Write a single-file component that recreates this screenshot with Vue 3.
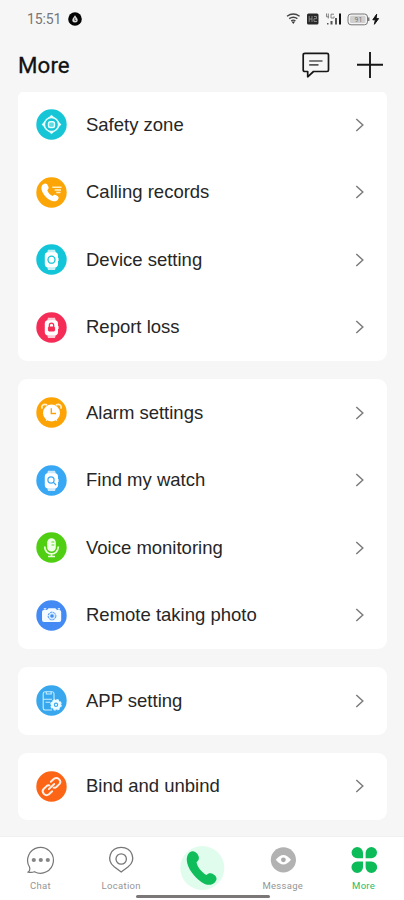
<script setup>
const groups = [
  [
    { label: 'Safety zone', icon: 'zone', color: '#16c5d6' },
    { label: 'Calling records', icon: 'call', color: '#fba506' },
    { label: 'Device setting', icon: 'device', color: '#12c5d8' },
    { label: 'Report loss', icon: 'loss', color: '#f52c56' },
  ],
  [
    { label: 'Alarm settings', icon: 'alarm', color: '#fca405' },
    { label: 'Find my watch', icon: 'find', color: '#38a7f4' },
    { label: 'Voice monitoring', icon: 'voice', color: '#50cf12' },
    { label: 'Remote taking photo', icon: 'camera', color: '#438af4' },
  ],
  [{ label: 'APP setting', icon: 'app', color: '#38a7ed' }],
  [{ label: 'Bind and unbind', icon: 'bind', color: '#fc6416' }],
]
</script>

<template>
  <div class="screen">
    <div class="status">
      <span class="time">15:51</span>
      <svg class="badge" width="14" height="14" viewBox="0 0 14 14">
        <circle cx="7" cy="7" r="6.8" fill="#050505" />
        <path d="M7 3.2C8 5 9.7 6.2 9.7 8.1A2.7 2.5 0 0 1 4.3 8.1C4.3 6.3 6 5 7 3.2Z" fill="#ddd" />
        <path d="M6.8 5.8V8.5H8.2" fill="none" stroke="#333" stroke-width=".8" />
      </svg>
      <svg class="indicators" width="96" height="16" viewBox="0 0 96 16">
        <g fill="none" stroke="#444" stroke-width="1.4">
          <path d="M1 5.3Q7.3 .8 13.6 5.3M3.2 7.6Q7.3 4.8 11.4 7.6" />
          <path d="M5.2 9.8Q7.3 8.5 9.4 9.8" />
        </g>
        <path d="M5.5 10.5H9.1L7.3 13Z" fill="#333" />
        <rect x="21" y="2.5" width="11.5" height="11" rx="1.5" fill="#292929" />
        <path d="M23.2 5V11M23.2 8H26M26 5V11M28 5.5H30.5V7.7H28V10.5H31" fill="none" stroke="#999" stroke-width=".8" />
        <path d="M40.5 2.5V5.8H43M42.3 2.5V7.5M48 3.2H45V7H48V5.3" fill="none" stroke="#777" stroke-width=".9" />
        <path d="M41 12H42.5V13.5H41ZM44.5 10H46.5V13.5H44.5ZM49 7H51V13.5H49Z" fill="#555" />
        <path d="M53 2.5H55V13.5H53Z" fill="#111" />
        <rect x="62" y="3" width="19.5" height="10.8" rx="3" fill="#f4f4f4" stroke="#777" />
        <rect x="64" y="4.8" width="15.5" height="7.2" rx="1.5" fill="#cfcfcf" />
        <path d="M82.7 6.5V10" stroke="#777" stroke-width="1.5" />
        <text x="68.5" y="11" class="level">91</text>
        <path d="M90.7 3.2L86.8 8.8H89.4L88.4 13.3L92.6 7.6H90Z" fill="#111" stroke="#111" stroke-width="1" />
      </svg>
    </div>

    <header class="header">
      <h1>More</h1>
      <svg class="comment" width="30" height="28" viewBox="0 0 30 28" fill="none" stroke="#171717" stroke-width="1.7" stroke-linejoin="round">
        <path d="M4 2.3H26Q27.5 2.3 27.5 3.8V19Q27.5 20.5 26 20.5H12.5L6.7 25.8V20.5H4Q2.2 20.5 2.2 19V3.8Q2.2 2.3 4 2.3Z" />
        <path d="M8.2 10H21.5M8.2 13.8H17.5" stroke="#555" />
      </svg>
      <svg class="plus" width="28" height="28" viewBox="0 0 28 28" stroke="#171717" stroke-width="1.9">
        <path d="M1 13.7H27M14 1V27" />
      </svg>
    </header>

    <main class="groups">
      <section v-for="(group, i) in groups" :key="i" class="card">
        <div v-for="item in group" :key="item.label" class="row">
          <svg class="icon" width="31" height="31" viewBox="0 0 31 31">
            <circle cx="15.5" cy="15.5" r="15.2" :fill="item.color" />

            <g v-if="item.icon === 'zone'" fill="none" stroke="#e5ffff">
              <circle cx="15.5" cy="15.5" r="7.1" stroke-width="1.5" />
              <rect x="12.5" y="12.7" width="6" height="5.8" rx="1.8" fill="#5edbe6" stroke-width="1.4" />
              <path d="M13.8 8.2H17.2L15.5 6.5ZM13.8 22.8H17.2L15.5 24.5ZM8.2 13.8V17.2L6.5 15.5ZM22.8 13.8V17.2L24.5 15.5Z" fill="#e5ffff" stroke-width="1.2" />
            </g>

            <g v-else-if="item.icon === 'call'">
              <path d="M7.2 7.3C9.3 5.8 10.8 6.4 12.1 8.9C13.3 11.1 12.3 12.2 11.3 13.2C12 15.6 14.2 17.9 16.6 19C17.7 17.8 18.8 17.2 20.7 18.4C23 19.9 23.2 21 21.8 22.7C19.8 25 16.5 24.8 13 22.5C8.2 19.3 5.1 13.8 5.4 10.4C5.6 9 6.3 8 7.2 7.3Z" fill="white" />
              <path d="M16.3 10.3H25.5M18.6 13H25M20.3 15.5H24.5" stroke="#fff0c4" stroke-width="1.4" />
            </g>

            <g v-else-if="['device', 'loss', 'find'].includes(item.icon)">
              <path d="M12 5.7H19L20.3 10H10.7ZM10.7 21H20.3L19 26H12Z" fill="white" opacity=".75" />
              <rect x="8.8" y="8.3" width="13.2" height="15" rx="3.4" fill="white" />
              <path d="M22.3 14V17" stroke="white" stroke-width=".7" />
              <circle v-if="item.icon === 'device'" cx="15.5" cy="15.7" r="3.5" fill="none" :stroke="item.color" stroke-width="1.3" />
              <g v-else-if="item.icon === 'loss'" :stroke="item.color" fill="none">
                <path d="M13.3 15V13.4A2.2 2.2 0 0 1 17.7 13.4V15" stroke-width="1.2" />
                <rect x="12.4" y="15" width="6.2" height="4" rx=".6" :fill="item.color" />
              </g>
              <g v-else :stroke="item.color" stroke-width="1.2" fill="none">
                <circle cx="15" cy="15" r="3.1" />
                <path d="M17.2 17.2L20 20" />
              </g>
            </g>

            <g v-else-if="item.icon === 'alarm'">
              <path d="M6.3 11.7C4.7 8.5 7.5 6.4 11.2 8M19.8 8C23.5 6.4 26.3 8.5 24.7 11.7" fill="none" stroke="#fff0ca" stroke-width="1.6" />
              <circle cx="15.5" cy="16" r="8.5" fill="white" />
              <path d="M11 22.5L10.3 23.6M20 22.5L20.7 23.6" stroke="white" stroke-width="1.3" />
              <path d="M15.3 11.3V16.5H20" fill="none" :stroke="item.color" stroke-width="1.4" />
            </g>

            <g v-else-if="item.icon === 'voice'">
              <rect x="11.2" y="6.3" width="8.6" height="13.2" rx="4.3" fill="#f1ffe9" />
              <path d="M15.5 10H18.3M15.5 13H18.3" :stroke="item.color" stroke-width=".9" />
              <path d="M8.7 14.5C8.7 24.3 22.3 24.3 22.3 14.5M15.5 21.8V24M12 24.5H19" fill="none" stroke="#e9ffdc" stroke-width="1.7" />
            </g>

            <g v-else-if="item.icon === 'camera'">
              <path d="M7.8 10H11L12.5 8.2H19.3L21 10H23.2Q25.2 10 25.2 12V20Q25.2 22 23.2 22H8Q6 22 6 20V12Q6 10 7.8 10Z" fill="#f3fbff" />
              <path d="M7.8 8.9H10.3M21.8 8.9H24" stroke="white" stroke-width="1.2" />
              <circle cx="16" cy="16" r="3.9" fill="#d3ebff" :stroke="item.color" stroke-width=".9" stroke-dasharray="2.4 .8" />
              <circle cx="16" cy="16" r="1.8" :fill="item.color" />
            </g>

            <g v-else-if="item.icon === 'app'" fill="none" stroke="#c8efff" stroke-width="1.1">
              <path d="M18 14V8.8Q18 6.8 16.2 6.8H9Q7.2 6.8 7.2 8.8V23.3Q7.2 25 9 25H16M10.3 7V9H15.2V7M7.2 14.3H16M9.5 17.2H14" />
              <circle cx="20" cy="19.8" r="3.6" stroke="#eefcff" stroke-width="2.8" />
              <circle cx="20" cy="19.8" r="5.2" stroke="#eefcff" stroke-width="1.2" stroke-dasharray="2.4 1.68" />
              <circle cx="20" cy="19.8" r="1.1" fill="#eefcff" stroke="none" />
            </g>

            <g v-else fill="none" stroke="#fff1e9" stroke-width="1.9" stroke-linecap="round" stroke-linejoin="round">
              <path d="M14.8 10.8L18 7.8Q20.6 5.9 23 8.1Q25.6 10.7 23.4 13.1L20.4 16Q19.1 17.1 17.6 16.7" />
              <path d="M16.2 20.3L13 23.3Q10.4 25.2 8 23Q5.4 20.4 7.6 18L10.6 15.1Q11.9 14 13.4 14.4" />
              <path d="M12.8 18.1L18.2 13" />
            </g>
          </svg>
          <span class="label">{{ item.label }}</span>
          <svg class="arrow" width="10" height="16" viewBox="0 0 10 16" fill="none" stroke="#7c7c7c" stroke-width="1.5">
            <path d="M1.3 2L7.8 8L1.3 14" />
          </svg>
        </div>
      </section>
    </main>

    <nav class="tabs">
      <div class="tab">
        <svg width="30" height="30" viewBox="0 0 30 30" fill="none" stroke="#777" stroke-width="1.2">
          <path d="M4.5 22A12.9 12.9 0 1 1 9.5 26.7Q6.5 28 3.2 27.1Q5.5 25.5 4.5 22Z" />
          <g fill="#858585" stroke="none">
            <circle cx="8.8" cy="15" r="2.1" /><circle cx="15.8" cy="15" r="2.1" /><circle cx="22.8" cy="15" r="2.1" />
          </g>
        </svg>
        <span>Chat</span>
      </div>
      <div class="tab">
        <svg width="30" height="30" viewBox="0 0 30 30" fill="none" stroke="#777" stroke-width="1.3">
          <path d="M15.2 27L8.2 21.8C-.3 14.8 4.2 2.3 15.2 2.3S30.7 14.8 22.2 21.8Z" />
          <circle cx="15.2" cy="14" r="5.2" />
        </svg>
        <span>Location</span>
      </div>
      <div class="dial">
        <svg width="46" height="46" viewBox="0 0 46 46">
          <circle cx="23.3" cy="23" r="22" fill="#e0fcec" />
          <path d="M10.3 7.7C13 5 16.8 6 18.9 9.7C20.8 13 19.9 15.3 17.5 17.2C18.4 22 22.7 27.2 27.4 30C29.6 28.3 31.4 27.6 34.6 29.5C38.1 31.5 38.5 34.7 35.8 37.4C32.3 41 27.4 40.5 22.3 36.9C14.4 31.5 8.3 22.5 7.8 15.5C7.6 12.2 8.3 9.7 10.3 7.7Z" fill="#10bd5b" />
        </svg>
      </div>
      <div class="tab">
        <svg width="30" height="30" viewBox="0 0 30 30">
          <circle cx="15.4" cy="14.8" r="12.6" fill="#b2b2b2" />
          <path d="M7.8 14.8Q15.4 5.3 23 14.8Q15.4 24.3 7.8 14.8Z" fill="white" />
          <circle cx="15.4" cy="14.8" r="2.4" fill="#aaa" />
        </svg>
        <span>Message</span>
      </div>
      <div class="tab active">
        <svg width="30" height="30" viewBox="0 0 30 30" fill="#0cbc59">
          <path d="M8.2 2A5.8 5.8 0 0 1 14 7.8V13.2H8.2A5.6 5.6 0 0 1 8.2 2Z" />
          <path d="M22.4 2A5.8 5.8 0 0 0 16.6 7.8V13.2H22.4A5.6 5.6 0 0 0 22.4 2Z" />
          <path d="M8.2 28A5.8 5.8 0 0 0 14 22.2V16.5H8.2A5.7 5.7 0 0 0 8.2 28Z" />
          <path d="M22.4 28A5.8 5.8 0 0 1 16.6 22.2V16.5H22.4A5.7 5.7 0 0 1 22.4 28Z" />
        </svg>
        <span>More</span>
      </div>
      <div class="home-bar"></div>
    </nav>
  </div>
</template>

<style>
body {
  margin: 0;
  background: #f6f6f6;
}
</style>

<style scoped>
.screen {
  width: 404px;
  height: 900px;
  display: flex;
  flex-direction: column;
  overflow: hidden;
  background: #f6f6f6;
  font-family: 'Liberation Sans', sans-serif;
}
.status {
  height: 37px;
  flex: none;
  display: flex;
  align-items: center;
  box-sizing: border-box;
  padding: 0 22px 0 27px;
}
.time {
  width: 41px;
  font: 14px/18px Roboto, sans-serif;
  color: #777;
  letter-spacing: -0.1px;
}
.indicators {
  margin-left: auto;
}
.level {
  font: 7px Roboto, sans-serif;
  fill: #777;
}
.header {
  height: 55px;
  flex: none;
  display: flex;
  align-items: center;
  box-sizing: border-box;
  padding: 0 20px 0 18px;
}
h1 {
  flex: 1;
  margin: 0;
  font: 400 22.3px/28px Roboto, sans-serif;
  -webkit-text-stroke: 0.3px #111;
  letter-spacing: 0.1px;
  color: #111;
}
.comment {
  margin-right: 25px;
}
.groups {
  flex: 1;
  min-height: 0;
  overflow: hidden;
  display: flex;
  flex-direction: column;
  gap: 18.1px;
  padding: 0 17px 0 18px;
}
.card {
  flex: none;
  background: #fff;
  border-radius: 9px;
}
.card:first-child {
  margin-top: -1.2px;
  border-radius: 7px 7px 9px 9px;
}
.row {
  height: 67.5px;
  display: flex;
  align-items: center;
  padding: 0 22px 0 18.4px;
}
.label {
  flex: 1;
  margin-left: 18.6px;
  font-size: 18.5px;
  line-height: 24px;
  color: #262626;
  white-space: nowrap;
}
.tabs {
  position: relative;
  height: 63px;
  flex: none;
  display: flex;
  background: #fff;
  border-top: 1px solid #f0f0f0;
}
.tab {
  width: 81px;
  display: flex;
  flex-direction: column;
  align-items: center;
  padding-top: 8px;
  font: 9.5px/12px Roboto, sans-serif;
  letter-spacing: 0.3px;
  color: #959595;
}
.tab span {
  margin-top: 5px;
}
.tab.active {
  color: #24bd68;
}
.dial {
  width: 81px;
  display: flex;
  justify-content: center;
  padding-top: 8px;
}
.home-bar {
  position: absolute;
  left: 136px;
  bottom: 2px;
  width: 134px;
  height: 3px;
  border-radius: 2px;
  background: #7b7777;
}
</style>
